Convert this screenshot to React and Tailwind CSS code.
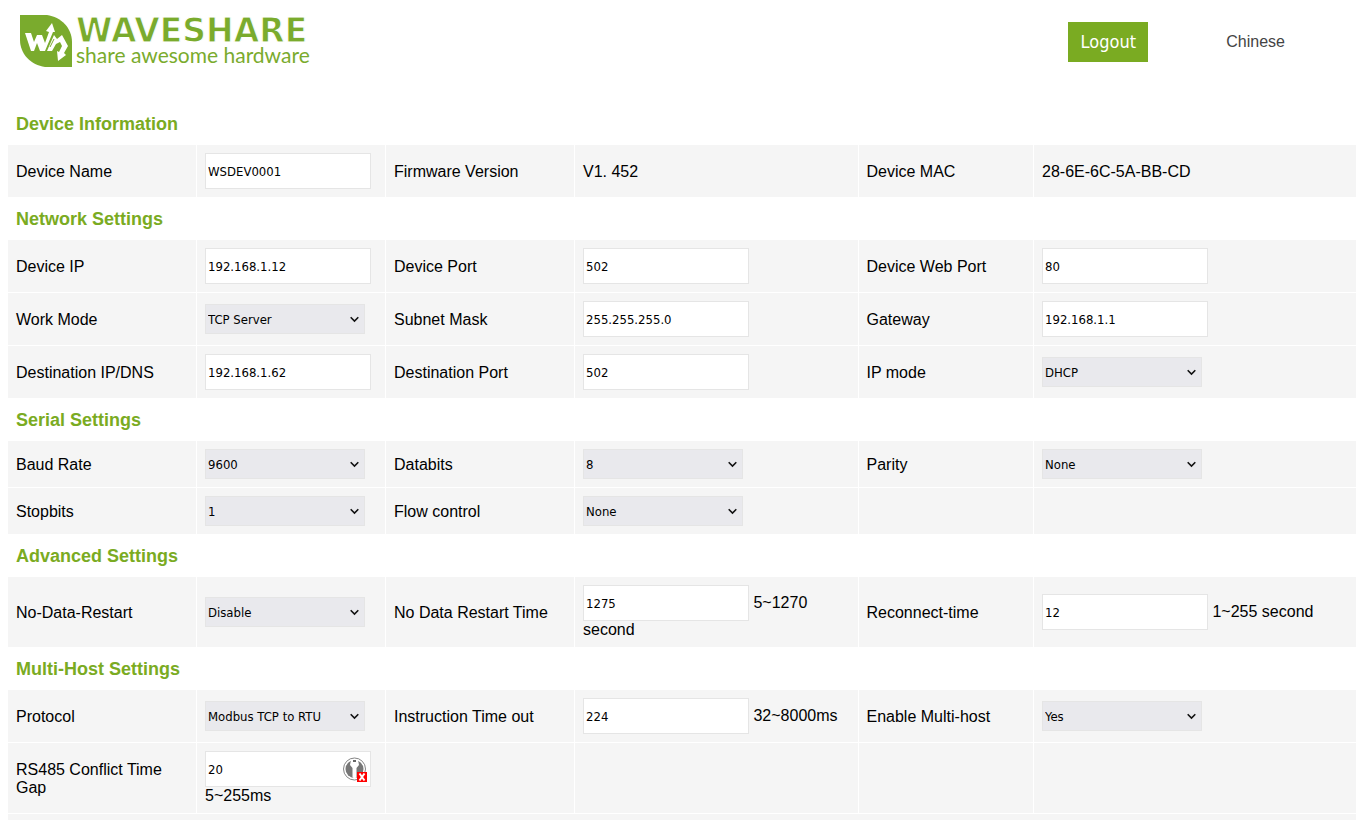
import React from "react";

const sections = [
  {
    title: "Device Information",
    rows: [
      [
        { id: "name", label: "Device Name", type: "input", value: "WSDEV0001" },
        { id: "fw", label: "Firmware Version", type: "text", value: "V1. 452" },
        { id: "mac", label: "Device MAC", type: "text", value: "28-6E-6C-5A-BB-CD" },
      ],
    ],
  },
  {
    title: "Network Settings",
    rows: [
      [
        { id: "ip", label: "Device IP", type: "input", value: "192.168.1.12" },
        { id: "port", label: "Device Port", type: "input", value: "502" },
        { id: "webport", label: "Device Web Port", type: "input", value: "80" },
      ],
      [
        { id: "mode", label: "Work Mode", type: "select", value: "TCP Server" },
        { id: "mask", label: "Subnet Mask", type: "input", value: "255.255.255.0" },
        { id: "gateway", label: "Gateway", type: "input", value: "192.168.1.1" },
      ],
      [
        { id: "destip", label: "Destination IP/DNS", type: "input", value: "192.168.1.62" },
        { id: "destport", label: "Destination Port", type: "input", value: "502" },
        { id: "ipmode", label: "IP mode", type: "select", value: "DHCP" },
      ],
    ],
  },
  {
    title: "Serial Settings",
    rows: [
      [
        { id: "baud", label: "Baud Rate", type: "select", value: "9600" },
        { id: "databits", label: "Databits", type: "select", value: "8" },
        { id: "parity", label: "Parity", type: "select", value: "None" },
      ],
      [
        { id: "stopbits", label: "Stopbits", type: "select", value: "1" },
        { id: "flow", label: "Flow control", type: "select", value: "None" },
        null,
      ],
    ],
  },
  {
    title: "Advanced Settings",
    rows: [
      [
        { id: "nodata", label: "No-Data-Restart", type: "select", value: "Disable" },
        { id: "nodatatime", label: "No Data Restart Time", type: "input", value: "1275", hint: "5~1270 second" },
        { id: "reconnect", label: "Reconnect-time", type: "input", value: "12", hint: "1~255 second" },
      ],
    ],
  },
  {
    title: "Multi-Host Settings",
    rows: [
      [
        { id: "protocol", label: "Protocol", type: "select", value: "Modbus TCP to RTU" },
        { id: "timeout", label: "Instruction Time out", type: "input", value: "224", hint: "32~8000ms" },
        { id: "multihost", label: "Enable Multi-host", type: "select", value: "Yes" },
      ],
      [
        { id: "gap", label: "RS485 Conflict Time Gap", type: "input", value: "20", hint: "5~255ms", icon: true },
        null,
        null,
      ],
    ],
  },
];

const cell = "px-2 pb-2 border-r border-b border-white bg-[#f5f5f5]";
const controlFont = "font-['DejaVu_Sans_Condensed','DejaVu_Sans',sans-serif] [font-stretch:condensed]";

const Logo = () => (
  <div className="flex items-start gap-1 text-[#7aab2d]">
    <svg width="52" height="52" viewBox="0 0 52 52">
      <path d="M0 0H27C41 2 52 13 52 27V52H25C11 50 0 39 0 25Z" fill="currentColor" />
      <path
        d="M5 18H11L14 27L17 20H22L25 28L29 17L26 16L32 8L35 17L33 17L25 36H20L17 28L14 36H11Z"
        fill="#fff"
      />
      <path
        d="M27 36L34 20L37 24L42 20L48 31L44 38L46 40L38 46L37 36L39 37L42 31L40 27L36 29L32 36Z"
        fill="#fff"
      />
      <path d="M30 32L34 24" stroke="currentColor" />
    </svg>
    <div className="flex flex-col">
      <span className="text-[33px] leading-[32px] font-bold font-['DejaVu_Sans',sans-serif] [-webkit-text-stroke:1px_white]">
        WAVESHARE
      </span>
      <span className="text-[21px] leading-[16px] font-[Lato,sans-serif]">
        share awesome hardware
      </span>
    </div>
  </div>
);

const KeyIcon = () => (
  <svg className="absolute right-1 top-1.5" width="24" height="25" viewBox="0 0 24 25">
    <circle cx="11.5" cy="12" r="11" fill="#fff" stroke="#858585" />
    <circle cx="11.5" cy="12" r="9" fill="#777" />
    <path d="M8 3H15L16 8L13.5 11V20L11.5 22L9.5 20V11L7 8Z" fill="#fff" />
    <path d="M10 4H13" stroke="#666" strokeWidth="2" />
    <rect x="14" y="15" width="10" height="10" fill="#f00" />
    <path d="M16.5 16.5L21.5 23.5M21.5 16.5L16.5 23.5" stroke="#fff" strokeWidth="2" />
  </svg>
);

const Control = ({ field }) => {
  if (field.type === "text") {
    return <span id={field.id}>{field.value}</span>;
  }
  if (field.type === "select") {
    return (
      <div className="relative w-40">
        <select
          id={field.id}
          defaultValue={field.value}
          className={`block appearance-none w-full h-[30px] px-0.5 pt-0.5 border border-[#e5e5e5] bg-[#e9e9ed] text-[13px] ${controlFont}`}
        >
          <option>{field.value}</option>
        </select>
        <svg
          className="absolute right-1.5 top-3 pointer-events-none"
          width="9"
          height="7"
          viewBox="0 0 9 7"
        >
          <path d="M0.7 1.2L4.5 5L8.3 1.2" fill="none" stroke="#111" strokeWidth="1.6" />
        </svg>
      </div>
    );
  }
  return (
    <>
      <span className="relative inline-block">
        <input
          id={field.id}
          type="text"
          defaultValue={field.value}
          className={`w-[166px] h-9 px-0.5 border border-[#e5e5e5] bg-white text-[13px] ${controlFont}`}
        />
        {field.icon && <KeyIcon />}
      </span>
      {field.hint && <> {field.hint}</>}
    </>
  );
};

const Field = ({ field }) => (
  <>
    <td className={`${cell} pt-2.5`}>
      {field && <label htmlFor={field.id}>{field.label}</label>}
    </td>
    <td className={`${cell} ${field?.type === "text" ? "pt-2.5" : "pt-2"}`}>
      {field && <Control field={field} />}
    </td>
  </>
);

export default function App() {
  return (
    <div className="bg-white text-black text-base leading-[18px] font-['Liberation_Sans',Arial,sans-serif]">
      <header className="flex justify-between pl-5 pr-[71px] pt-[15px] pb-9">
        <Logo />
        <div className="flex items-center gap-[78px] pt-0.5">
          <button
            type="button"
            className={`w-20 h-10 bg-[#7aab22] text-white text-lg ${controlFont}`}
          >
            Logout
          </button>
          <a href="#" className="text-[#444]">
            Chinese
          </a>
        </div>
      </header>

      <main className="pl-2 overflow-hidden">
        <table className="w-[calc(100%+2px)] table-fixed border-separate border-spacing-0">
          <colgroup>
            <col className="w-[14%]" />
            <col className="w-[14%]" />
            <col className="w-[14%]" />
            <col className="w-[21%]" />
            <col className="w-[13%]" />
            <col className="w-[24%]" />
          </colgroup>
          {sections.map((section) => (
            <tbody key={section.title}>
              <tr>
                <th colSpan={6} className="h-[42px] px-2 text-left text-lg font-bold text-[#7aab22]">
                  {section.title}
                </th>
              </tr>
              {section.rows.map((row, i) => (
                <tr key={i}>
                  {row.map((field, j) => (
                    <Field key={j} field={field} />
                  ))}
                </tr>
              ))}
            </tbody>
          ))}
          <tfoot>
            <tr>
              <td colSpan={6} className="h-1.5 bg-[#f5f5f5]" />
            </tr>
          </tfoot>
        </table>
      </main>
    </div>
  );
}
